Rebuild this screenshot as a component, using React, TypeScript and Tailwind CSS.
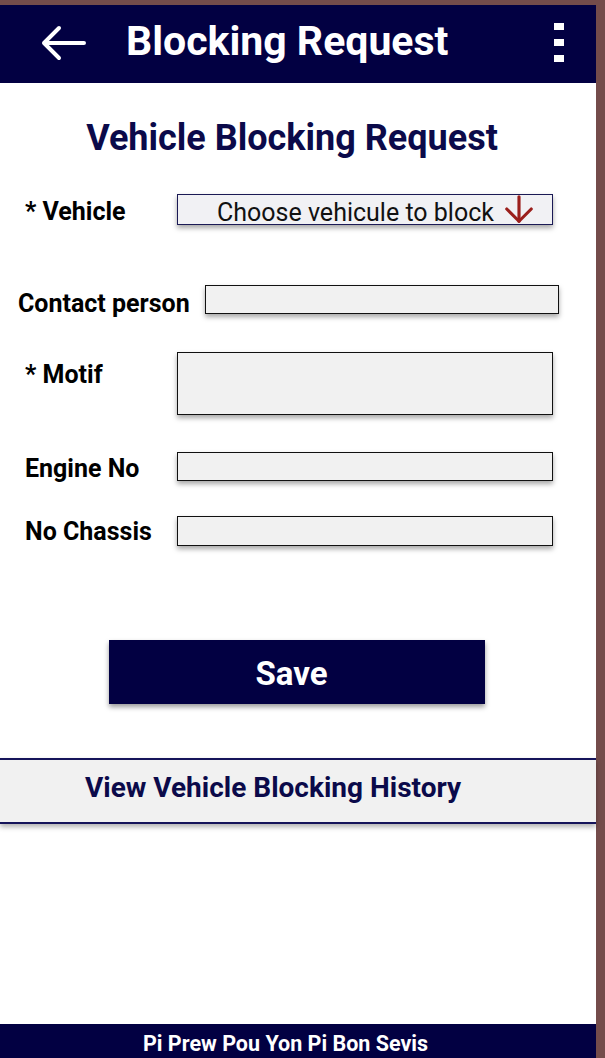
import { ArrowDown } from "lucide-react"

const box = "border-[1.5px] border-[#111] bg-[#f1f1f1] shadow-[0_3px_5px_rgba(0,0,0,0.35)]"
const label = "text-[25px] font-bold leading-[28px] text-black"

export default function App() {
    return (
        <div className="h-[1058px] w-[605px] bg-[#744c4b] pt-[5px] pr-[9px] font-['Roboto',sans-serif]">
            <div className="flex h-full flex-col bg-white">
                <header className="flex h-[78px] shrink-0 items-center bg-[#020042] text-white">
                    <svg className="ml-[41px] -mt-[2px]" width="45" height="36" viewBox="0 0 45 36" fill="none">
                        <path d="M43 18H3M18 3L3 18L18 33" stroke="white" strokeWidth="4" strokeLinecap="round" strokeLinejoin="round" />
                    </svg>
                    <h1 className="ml-[40px] -mt-[5px] text-[41px] font-bold leading-none">Blocking Request</h1>
                    <div className="ml-auto mr-[32px] -mt-[3px] flex flex-col gap-[9px]">
                        <span className="block h-[7px] w-[10px] bg-white" />
                        <span className="block h-[7px] w-[10px] bg-white" />
                        <span className="block h-[7px] w-[10px] bg-white" />
                    </div>
                </header>

                <h2 className="mt-[35px] h-[40px] pr-[12px] text-center text-[36px] font-bold leading-[40px] text-[#0b0a4a]">
                    Vehicle Blocking Request
                </h2>

                {/* vehicle select */}
                <div className="mt-[36px] flex h-[31px] items-start">
                    <label className={`ml-[25px] mt-[4px] w-[152px] ${label}`}>* Vehicle</label>
                    <div className="relative flex h-[31px] w-[376px] items-center border-[1.5px] border-[#1b1a55] bg-[#f1f1f4] pl-[39px] text-[25px] leading-none text-[#111] shadow-[0_3px_5px_rgba(0,0,0,0.35)]">
                        <span className="mt-[5px]">Choose vehicule to block</span>
                        <ArrowDown className="absolute right-[12px] -top-[7px] h-[42px] w-[42px] text-[#9b1f1c]" strokeWidth={1.8} />
                    </div>
                </div>

                <div className="mt-[60px] flex h-[29px] items-start">
                    <label className={`ml-[18px] mt-[5px] w-[187px] ${label}`}>Contact person</label>
                    <div className={`h-[29px] w-[354px] ${box}`} />
                </div>

                <div className="mt-[38px] flex items-start">
                    <label className={`ml-[25px] mt-[9px] w-[152px] ${label}`}>* Motif</label>
                    <div className={`h-[63px] w-[376px] ${box}`} />
                </div>

                <div className="mt-[37px] flex h-[29px] items-start">
                    <label className={`ml-[25px] mt-[3px] w-[152px] ${label}`}>Engine No</label>
                    <div className={`h-[29px] w-[376px] ${box}`} />
                </div>

                <div className="mt-[35px] flex h-[30px] items-start">
                    <label className={`ml-[25px] mt-[2px] w-[152px] ${label}`}>No Chassis</label>
                    <div className={`h-[30px] w-[376px] ${box}`} />
                </div>

                <button className="ml-[109px] mt-[94px] h-[64px] w-[376px] shrink-0 bg-[#020042] pr-[11px] pt-[4px] text-[33px] font-bold text-white shadow-[0_3px_5px_rgba(0,0,0,0.4)]">
                    Save
                </button>

                <div className="mt-[54px] flex h-[66px] shrink-0 items-center justify-center border-y-2 border-[#15145a] bg-[#f1f1f1] pr-[50px] pb-[6px] text-[28px] font-bold text-[#0b0a4a] shadow-[0_3px_5px_rgba(0,0,0,0.3)]">
                    View Vehicle Blocking History
                </div>

                <footer className="mt-auto flex h-[34px] shrink-0 items-center justify-center bg-[#020042] pr-[25px] pt-[6px] text-[21.5px] font-bold leading-none text-white">
                    Pi Prew Pou Yon Pi Bon Sevis
                </footer>
            </div>
        </div>
    )
}
